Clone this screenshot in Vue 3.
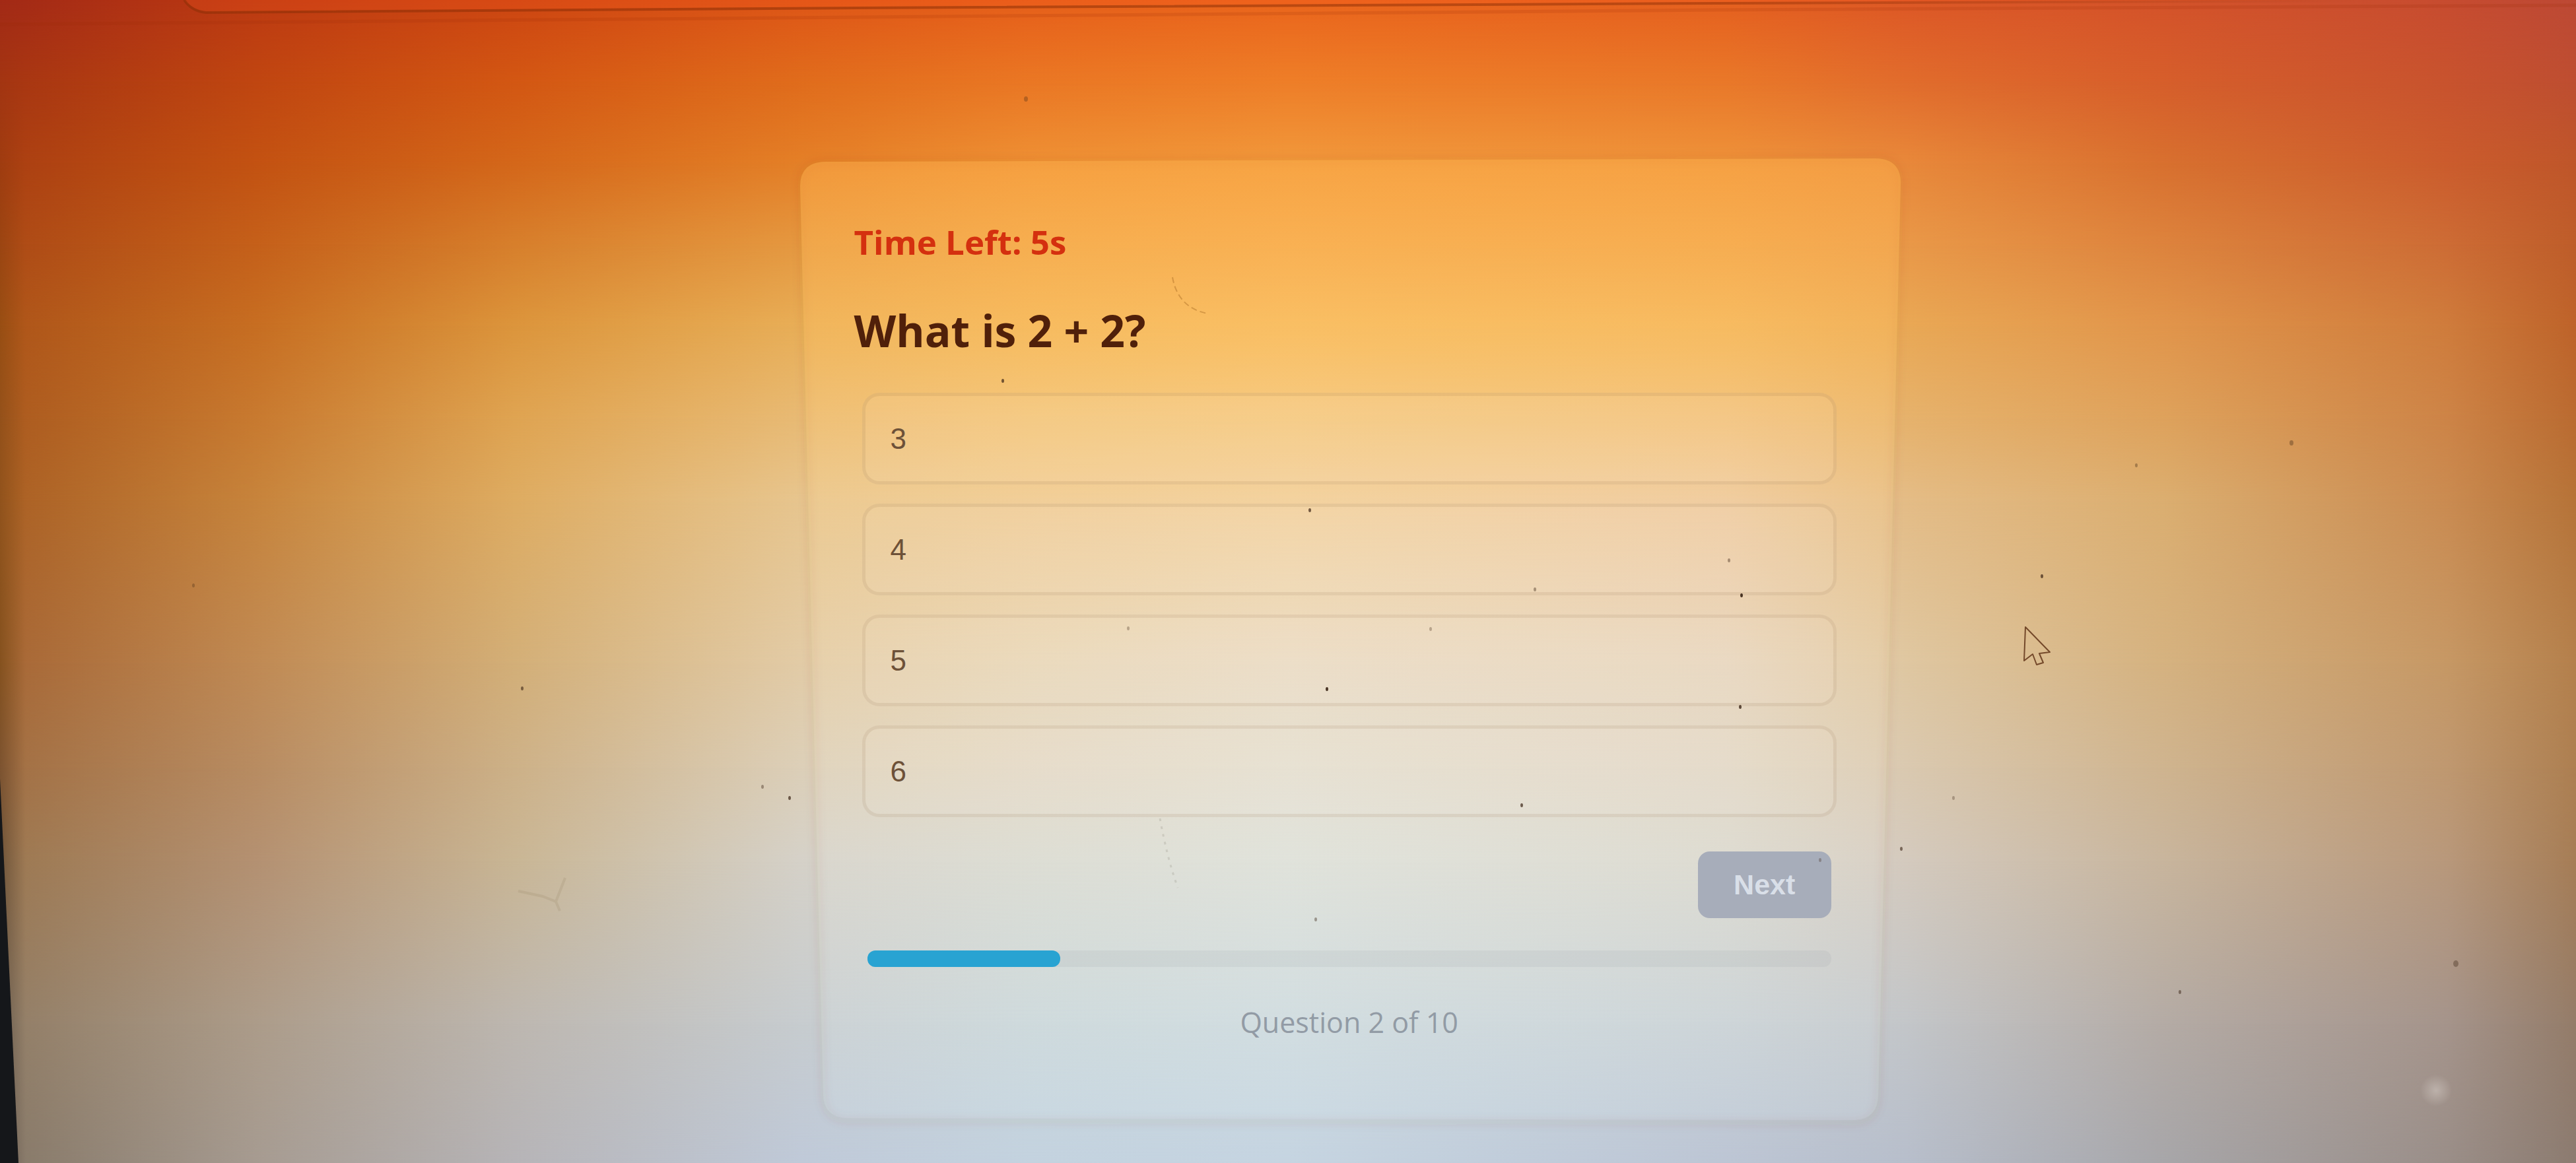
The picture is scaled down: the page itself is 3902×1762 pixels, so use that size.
<script setup>
import { ref, computed } from 'vue'

const options = ['3', '4', '5', '6']
const selected = ref(null)
const current = 2
const total = 10
const progress = computed(() => (current / total) * 100)

// Backdrop: each band is a horizontal blend that fades into the next one down.
const stops = [0, 1, 10, 20, 31, 40, 50, 67, 74, 84, 95, 100]
const bands = [
  { at: 0, colors: ['#a32a16', '#a52b16', '#bd3a12', '#cd4612', '#de5617', '#e65f1a', '#ea651c', '#e5601f', '#dd5826', '#d4532a', '#c74c30', '#bd4935'] },
  { at: 7, colors: ['#a33512', '#a93712', '#c04611', '#d35713', '#e06c1c', '#ea7724', '#ee7e28', '#e97829', '#e16c2c', '#d65e2b', '#c8532e', '#be4e31'] },
  { at: 14, colors: ['#9f3c10', '#ad4112', '#c35212', '#d4671a', '#e47f27', '#ee9034', '#f1983b', '#ee923a', '#e8883a', '#d8702f', '#cb5c2d', '#bf562a'] },
  { at: 21, colors: ['#9b4512', '#af4c16', '#c5601a', '#d77f2c', '#e59840', '#f0a649', '#f4aa4f', '#f0a44b', '#e99848', '#dd833d', '#cd6c35', '#be5d2a'] },
  { at: 28, colors: ['#984e13', '#b0571a', '#c76e22', '#dc953c', '#e8ae57', '#f2b75c', '#f6bd63', '#f2b75f', '#e9a855', '#e1954b', '#cf7c3c', '#be632a'] },
  { at: 36, colors: ['#94511a', '#ae5d20', '#c87a30', '#dfa452', '#e8ba74', '#f0c47c', '#f2c884', '#eec07f', '#e6b26c', '#dea25c', '#cd8447', '#ba6b31'] },
  { at: 43, colors: ['#91531c', '#ad6326', '#c7843c', '#deac62', '#e7c58e', '#edcb98', '#f0d0a0', '#ecc9a2', '#e4bc86', '#dbae70', '#ca8b51', '#b67338'] },
  { at: 57, colors: ['#85521f', '#a96a38', '#c08a54', '#d3af78', '#e2cba6', '#e6d5b9', '#e8dbc7', '#e5d4c0', '#dfc7a1', '#d5b280', '#c69865', '#b4804c'] },
  { at: 66, colors: ['#7c5330', '#a47246', '#b88c62', '#cdb188', '#dccfb8', '#e1d8c6', '#e2ded1', '#dfd6c6', '#dac9b0', '#cfb48f', '#bf9870', '#ad7f51'] },
  { at: 74, colors: ['#70553a', '#9e7a54', '#b49172', '#c9b695', '#d5d1c8', '#d9dad1', '#dde0d9', '#dad8ce', '#d4cabe', '#c8b59d', '#b8987b', '#a67d56'] },
  { at: 88, colors: ['#6a5c4d', '#948069', '#ac9c8a', '#bdb7b0', '#c7cccf', '#cad6d9', '#cedade', '#c9d0d4', '#c3c6c9', '#b4aba5', '#a5948b', '#947c69'] },
  { at: 100, colors: ['#65594e', '#897b6b', '#a69b91', '#b6b4b7', '#bfc9d8', '#c3d2df', '#c5d4e1', '#bcc5d4', '#b7becb', '#a7a6a9', '#9a8e88', '#8c7b70'] }
]

const bandStyles = bands.map((band, i) => {
  const fade = i === 0
    ? 'none'
    : `linear-gradient(to bottom, transparent ${bands[i - 1].at}%, #000 ${band.at}%)`
  return {
    backgroundImage: `linear-gradient(to right, ${band.colors.map((c, k) => `${c} ${stops[k]}%`).join(', ')})`,
    maskImage: fade
  }
})

const specks = [
  [1519, 577, 2, 0.7], [1984, 773, 2, 0.7], [2638, 902, 2, 0.9], [2010, 1044, 2, 0.9],
  [2636, 1071, 2, 0.8], [2305, 1220, 2, 0.7], [1196, 1209, 2, 0.7], [1155, 1192, 2, 0.4],
  [3093, 873, 2, 0.7], [2880, 1286, 2, 0.6], [791, 1043, 2, 0.6], [3720, 1460, 4, 0.35],
  [3302, 1503, 2, 0.5], [1554, 150, 3, 0.3], [3471, 671, 3, 0.35], [3236, 705, 2, 0.35],
  [2325, 893, 2, 0.4], [2619, 849, 2, 0.4], [1993, 1393, 2, 0.4], [1709, 952, 2, 0.3],
  [2167, 953, 2, 0.3], [2959, 1209, 2, 0.3], [293, 887, 2, 0.3], [2757, 1303, 2, 0.3]
]
</script>

<template>
  <div class="page">
    <div class="backdrop" aria-hidden="true">
      <div v-for="(style, i) in bandStyles" :key="i" class="band" :style="style"></div>
      <svg class="marks" viewBox="0 0 3902 1762" preserveAspectRatio="none">
        <defs>
          <radialGradient id="glow">
            <stop offset="0" stop-color="#d8d0ca" stop-opacity="0.5" />
            <stop offset="1" stop-color="#d8d0ca" stop-opacity="0" />
          </radialGradient>
          <linearGradient id="rim" x1="0" y1="0" x2="1" y2="0">
            <stop offset="0" stop-color="#8f2f06" stop-opacity="0.6" />
            <stop offset="0.7" stop-color="#8f2f06" stop-opacity="0.5" />
            <stop offset="1" stop-color="#8f2f06" stop-opacity="0" />
          </linearGradient>
        </defs>
        <path d="M279 0H3500L1300 10L312 18Q290 14 279 0Z" fill="#ff5a20" fill-opacity="0.22" />
        <path d="M279 0Q290 17 312 19L1300 12L2600 5L3600 1" fill="none" stroke="url(#rim)" stroke-width="4" />
        <path d="M0 37L1300 26L2600 15L3902 8" fill="none" stroke="#9c2c08" stroke-opacity="0.16" stroke-width="5" />
        <circle cx="3690" cy="1652" r="24" fill="url(#glow)" />
        <path d="M0 1180L28 1762H0Z" fill="#15171a" />
      </svg>
    </div>

    <main class="card">
      <svg class="surface" viewBox="0 0 1666 1458" preserveAspectRatio="none" aria-hidden="true">
        <defs>
          <linearGradient id="sheet" x1="0" y1="0" x2="0" y2="1">
            <stop offset="0" stop-color="#ffb04c" stop-opacity="0.5" />
            <stop offset="0.2" stop-color="#ffc468" stop-opacity="0.36" />
            <stop offset="0.4" stop-color="#ffe0a8" stop-opacity="0.18" />
            <stop offset="0.7" stop-color="#f4f0e4" stop-opacity="0.16" />
            <stop offset="1" stop-color="#dcecf2" stop-opacity="0.18" />
          </linearGradient>
          <filter id="soft" x="-5%" y="-5%" width="110%" height="110%">
            <feGaussianBlur stdDeviation="6" />
          </filter>
        </defs>
        <path class="shade" d="M0 42Q0 6 38 5L1628 0Q1666 0 1667 36L1633 1420Q1632 1460 1598 1462L72 1459Q36 1458 35 1420Z" filter="url(#soft)" />
        <path d="M0 42Q0 6 38 5L1628 0Q1666 0 1667 36L1633 1420Q1632 1456 1598 1458L72 1455Q36 1454 35 1420Z" fill="url(#sheet)" />
      </svg>

      <p class="timer">Time Left: 5s</p>
      <h1 class="question">What is 2 + 2?</h1>

      <div class="options">
        <button
          v-for="option in options"
          :key="option"
          type="button"
          class="option"
          :aria-pressed="selected === option"
          @click="selected = option"
        >{{ option }}</button>
      </div>

      <footer class="footer">
        <button type="button" class="next" :disabled="selected === null">Next</button>
        <div class="track" role="progressbar" aria-label="Quiz progress" :aria-valuenow="current" aria-valuemin="0" :aria-valuemax="total">
          <div class="fill" :style="{ width: progress + '%' }"></div>
        </div>
        <p class="count">Question {{ current }} of {{ total }}</p>
      </footer>
    </main>

    <svg class="overlay" viewBox="0 0 3902 1762" preserveAspectRatio="none" aria-hidden="true">
      <ellipse v-for="(s, i) in specks" :key="i" :cx="s[0]" :cy="s[1]" :rx="s[2]" :ry="s[2] + 1" fill="#3a2415" :fill-opacity="s[3]" />
      <path d="M1776 420Q1784 466 1829 475" fill="none" stroke="#a0641e" stroke-opacity="0.4" stroke-width="2" stroke-dasharray="9 5" />
      <path d="M1757 1240Q1768 1300 1784 1345" fill="none" stroke="#8f8d80" stroke-opacity="0.25" stroke-width="3" stroke-dasharray="4 8" />
      <path d="M785 1350L822 1358L842 1366L848 1380M842 1366L856 1330" fill="none" stroke="#8f7d60" stroke-opacity="0.18" stroke-width="4" />
      <path d="M3068 950L3066 1001L3079 991L3085 1007L3095 1004L3089 990L3105 988Z" fill="none" stroke="#74492a" stroke-width="2" stroke-linejoin="round" />
    </svg>
  </div>
</template>

<style>
body {
  margin: 0;
}
</style>

<style scoped>
.page {
  position: relative;
  box-sizing: border-box;
  min-height: 100vh;
  padding: 240px 0 60px;
  overflow: hidden;
  font-family: "Open Sans", "Noto Sans", sans-serif;
}

.backdrop,
.band,
.marks,
.overlay,
.surface {
  position: absolute;
  inset: 0;
  width: 100%;
  height: 100%;
}

.overlay {
  pointer-events: none;
}

.surface {
  overflow: visible;
  z-index: -1;
}

.shade {
  fill: none;
  stroke: #7a3c10;
  stroke-opacity: 0.07;
  stroke-width: 10;
}

.card {
  position: relative;
  z-index: 0;
  box-sizing: border-box;
  width: 42.7%;
  margin-left: 31.05%;
  padding: 94px 96px 116px 82px;
}

.timer {
  margin: 0;
  font-size: 51px;
  line-height: 64px;
  font-weight: 700;
  color: #d4300f;
}

.question {
  margin: 62px 0 0;
  font-size: 66px;
  line-height: 80px;
  font-weight: 700;
  color: #50200a;
}

.options {
  display: flex;
  flex-direction: column;
  gap: 29px;
  margin: 55px 0 0 12px;
}

.option {
  box-sizing: border-box;
  height: 139px;
  padding: 0 38px;
  border: 5px solid rgba(130, 90, 50, 0.11);
  border-radius: 26px;
  background: rgba(255, 240, 225, 0.08);
  font-family: "Liberation Sans", Arial, sans-serif;
  font-size: 44px;
  text-align: left;
  color: #6d5138;
}

.footer {
  display: flex;
  flex-direction: column;
  margin: 52px 8px 0 20px;
}

.next {
  align-self: flex-end;
  width: 202px;
  height: 101px;
  padding: 0;
  border: 0;
  border-radius: 18px;
  background: #a7adba;
  font-family: "Liberation Sans", Arial, sans-serif;
  font-size: 43px;
  font-weight: 700;
  color: #d9dfe8;
}

.track {
  height: 25px;
  margin-top: 49px;
  border-radius: 12px;
  background: rgba(150, 155, 165, 0.13);
}

.fill {
  height: 100%;
  border-radius: 12px;
  background: #28a3d2;
}

.count {
  margin: 52px 0 0;
  font-size: 43px;
  line-height: 64px;
  text-align: center;
  color: #929ba5;
}
</style>
